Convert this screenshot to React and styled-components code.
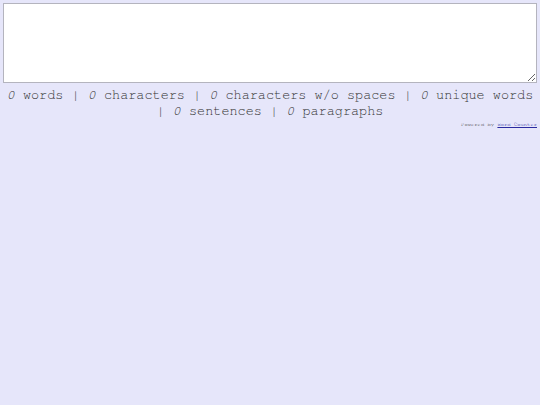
import React from "react";
import styled, { createGlobalStyle } from "styled-components";

const Global = createGlobalStyle`
  html, body { margin: 0; padding: 0; background: #e6e6fa; }
  body { font-family: "Nimbus Mono PS", "FreeMono", "Courier", "Liberation Mono", monospace; }
`;

const Wrap = styled.div`
  padding: 3px;
  display: flex;
  flex-direction: column;
`;

const Area = styled.textarea`
  box-sizing: border-box;
  width: 100%;
  height: 80px;
  margin: 0;
  border: 1px solid #b4b4be;
  background: #fff;
  display: block;
  font-family: "Liberation Mono", monospace;
  font-size: 13px;
  padding: 2px;
`;

const Stats = styled.div`
  margin-top: 4px;
  text-align: center;
  font-family: "Nimbus Mono PS", "FreeMono", "Courier", "Liberation Mono", monospace;
  font-size: 13.5px;
  line-height: 16px;
  color: #333;
`;

const Num = styled.i`
  font-style: italic;
`;

const Powered = styled.div`
  text-align: right;
  font-family: "Nimbus Mono PS", "FreeMono", "Courier", "Liberation Mono", monospace;
  font-size: 5.5px;
  color: #333;
  margin-top: 3px;
  a { color: #2a2aa0; text-decoration: underline; }
`;

const items = [
  "words",
  "characters",
  "characters w/o spaces",
  "unique words",
  "sentences",
  "paragraphs",
];

export default function App() {
  return (
    <>
      <Global />
      <Wrap>
        <Area />
        <Stats>
          {items.map((t, i) => (
            <React.Fragment key={t}>
              {i > 0 ? " | " : ""}
              <Num>0</Num> {t}
            </React.Fragment>
          ))}
        </Stats>
        <Powered>
          Powered by <a href="#">Word Counter</a>
        </Powered>
      </Wrap>
    </>
  );
}
